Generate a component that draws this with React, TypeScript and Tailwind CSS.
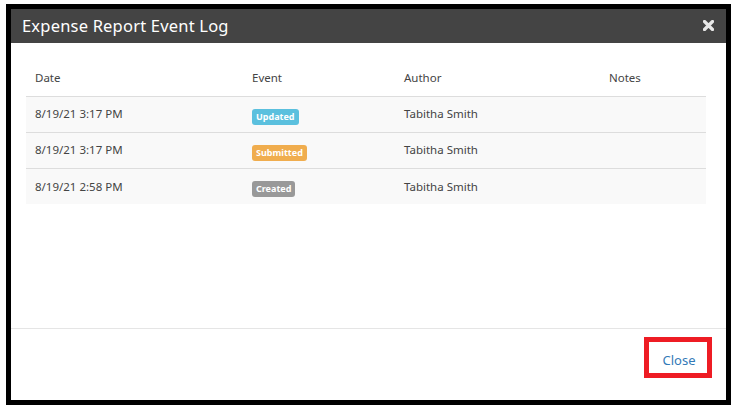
import React from 'react';

const rows = [
  { date: '8/19/21 3:17 PM', event: 'Updated', color: 'bg-[#5bc0de]', author: 'Tabitha Smith' },
  { date: '8/19/21 3:17 PM', event: 'Submitted', color: 'bg-[#f0ad4e]', author: 'Tabitha Smith' },
  { date: '8/19/21 2:58 PM', event: 'Created', color: 'bg-[#999999]', author: 'Tabitha Smith' },
];

export default function App() {
  return (
    <div className="w-[737px] h-[411px] bg-white pt-[4px] pl-[6px] font-['Noto_Sans',sans-serif]">
      <div className="w-[725px] h-[401px] border-[5px] border-black flex flex-col bg-white">
        {/* header */}
        <div className="h-[34px] bg-[#444444] flex items-center justify-between pl-[11px] pr-[12px]">
          <h1 className="text-white text-[16.5px] leading-none tracking-[0.2px]">Expense Report Event Log</h1>
          <svg width="11" height="11" viewBox="0 0 11 11" className="mt-[-1px]">
            <path d="M1.5 1.5 L9.5 9.5 M9.5 1.5 L1.5 9.5" stroke="#e8e8e8" strokeWidth="3.2" strokeLinecap="round" />
          </svg>
        </div>

        {/* body */}
        <div className="flex-1 px-[15px] pt-[21px]">
          <table className="w-[680px] text-[11.5px] text-[#444444] border-collapse">
            <thead>
              <tr className="h-[32px] border-b border-[#dddddd]">
                <th className="w-[217px] text-left font-normal pl-[9px] pt-[5px] align-top">Date</th>
                <th className="w-[152px] text-left font-normal pl-[9px] pt-[5px] align-top">Event</th>
                <th className="w-[205px] text-left font-normal pl-[9px] pt-[5px] align-top">Author</th>
                <th className="text-left font-normal pl-[9px] pt-[5px] align-top">Notes</th>
              </tr>
            </thead>
            <tbody>
              {rows.map((r, i) => (
                <tr key={i} className={`h-[36px] bg-[#f9f9f9] ${i < rows.length - 1 ? 'border-b border-[#dddddd]' : ''}`}>
                  <td className="pl-[9px]">{r.date}</td>
                  <td className="pl-[9px] pt-[3px]">
                    <span className={`${r.color} inline-block text-white font-bold text-[9px] leading-[16px] px-[4px] rounded-[3px]`}>
                      {r.event}
                    </span>
                  </td>
                  <td className="pl-[9px]">{r.author}</td>
                  <td className="pl-[9px]"></td>
                </tr>
              ))}
            </tbody>
          </table>
        </div>

        {/* footer */}
        <div className="h-[72px] border-t border-[#e5e5e5] flex justify-end items-start pt-[8px] pr-[14px]">
          <div className="w-[68px] h-[41px] border-[5px] border-[#ee1c24] flex items-center justify-center pt-[6px] pl-[2px]">
            <a className="text-[#337ab7] text-[13px]">Close</a>
          </div>
        </div>
      </div>
    </div>
  );
}
